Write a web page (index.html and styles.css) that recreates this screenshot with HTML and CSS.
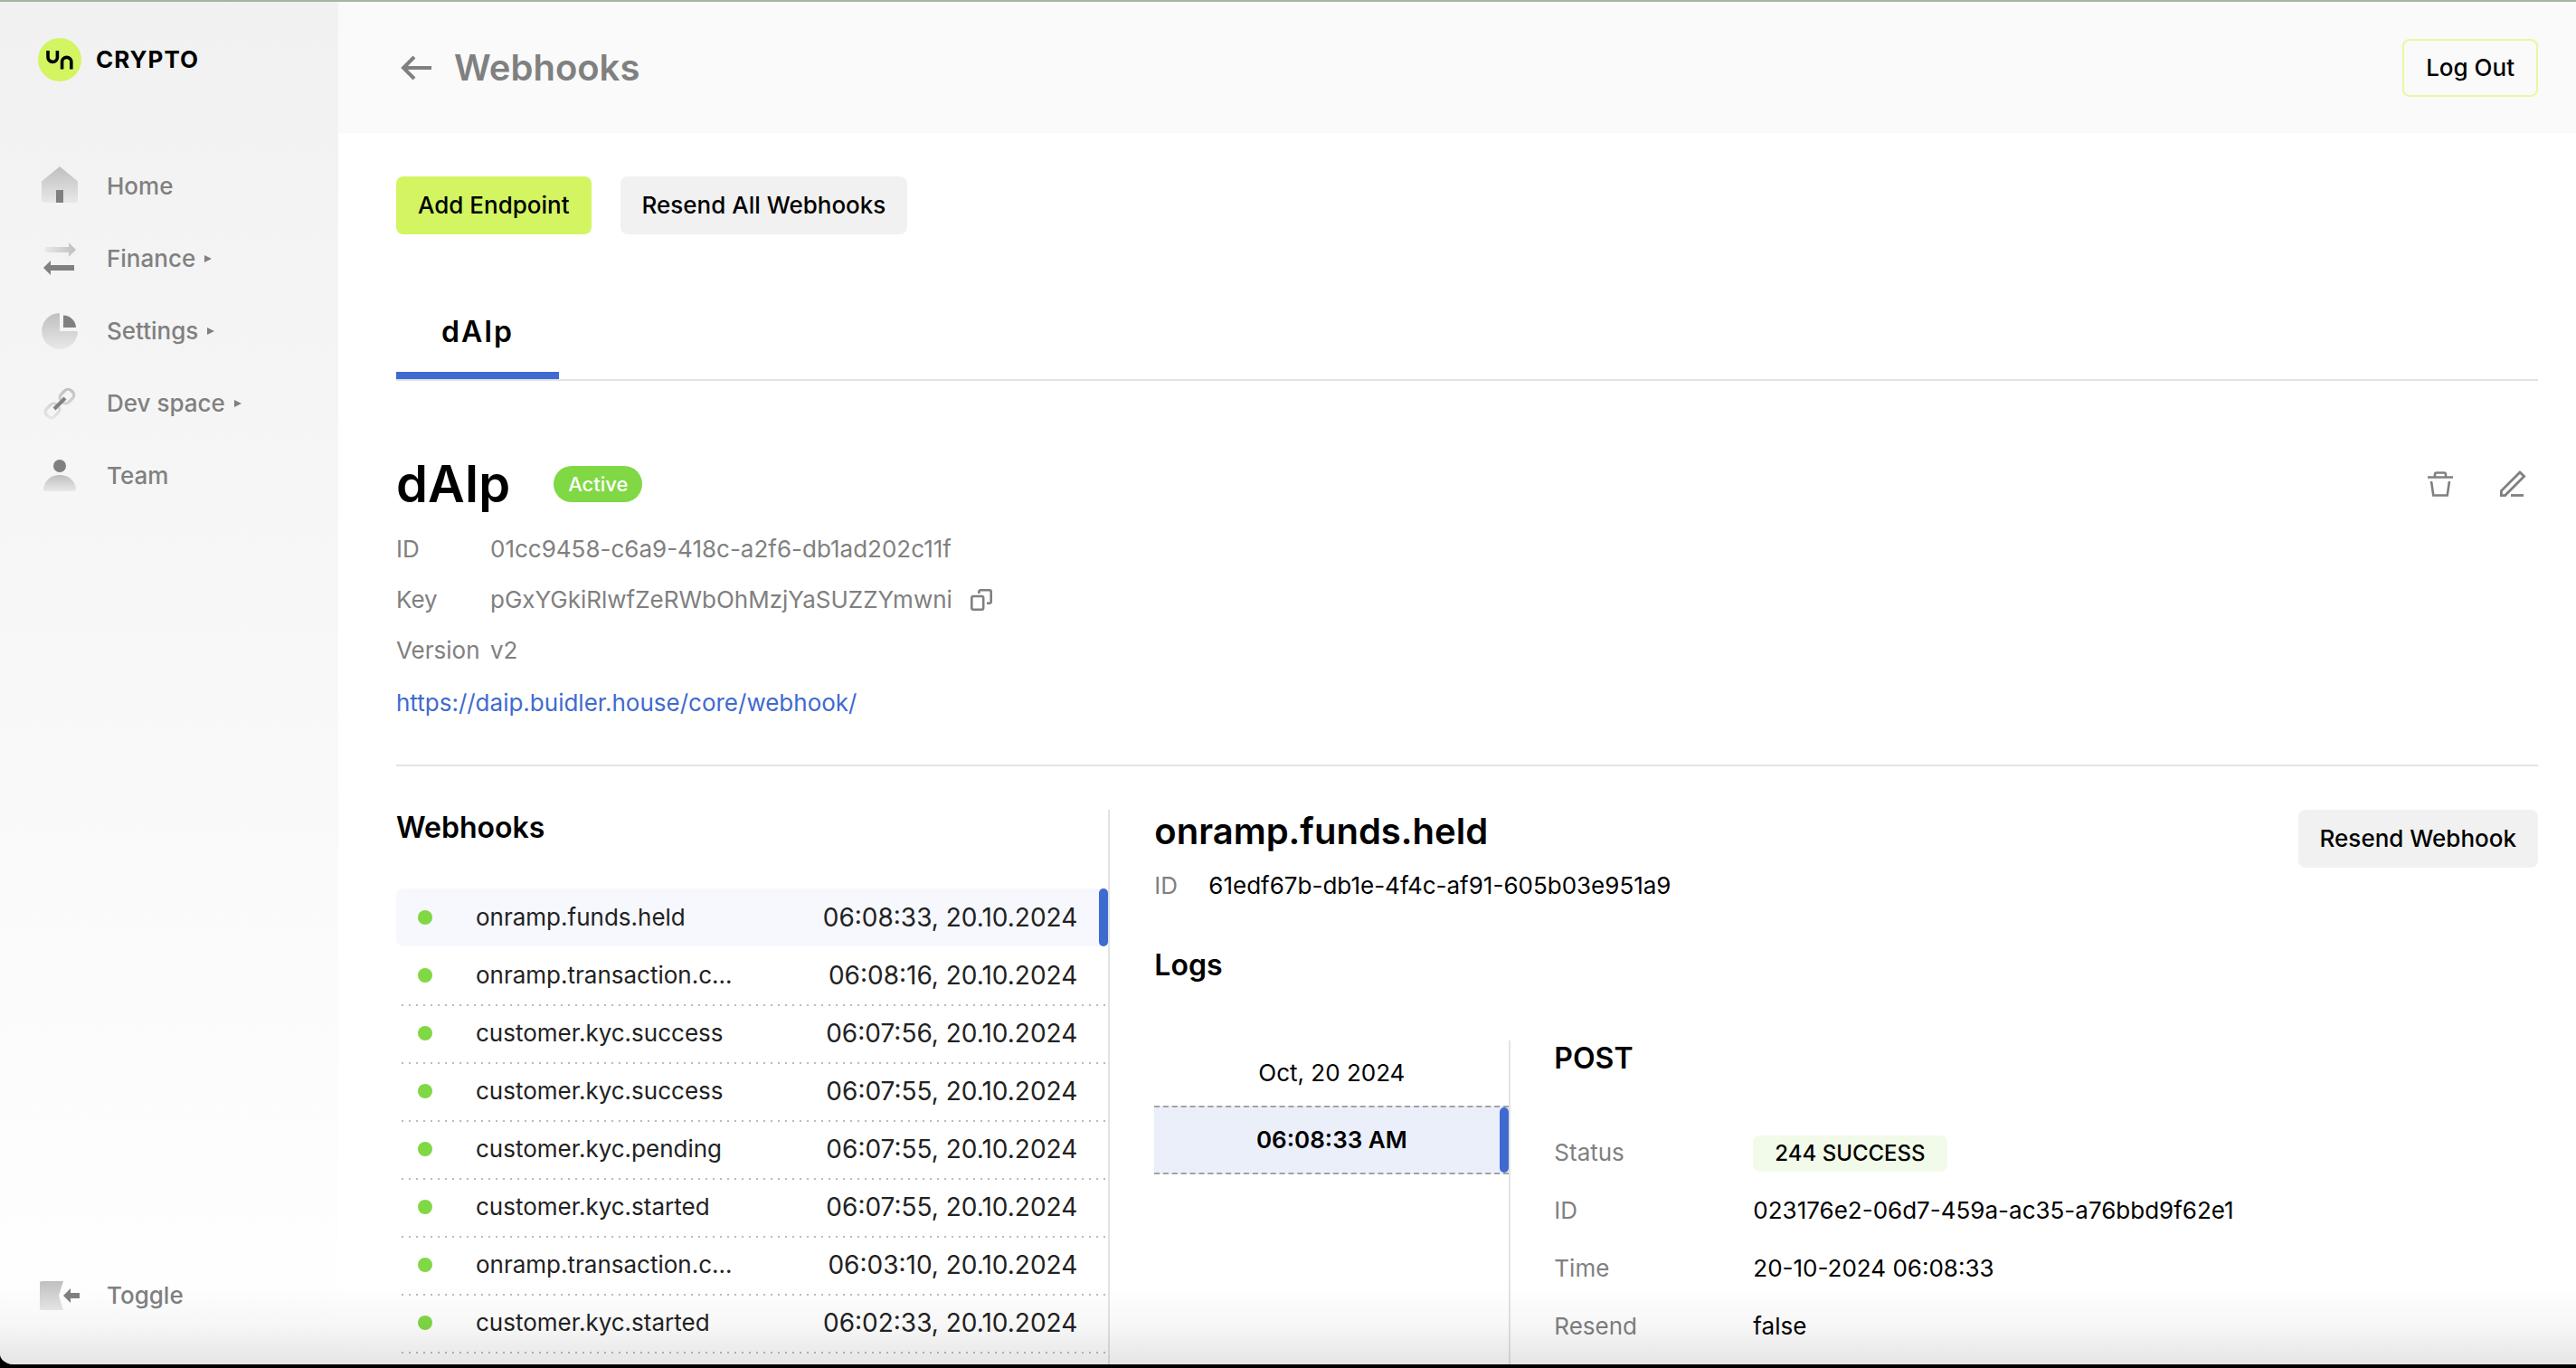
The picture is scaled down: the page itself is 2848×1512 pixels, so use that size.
FILE: index.html
```html
<!DOCTYPE html>
<html lang="en">
<head>
<meta charset="utf-8">
<title>Webhooks</title>
<meta name="viewport" content="width=device-width, initial-scale=1">
<link rel="stylesheet" href="styles.css">
</head>
<body>
<svg class="defs" width="0" height="0" aria-hidden="true">
  <defs>
    <linearGradient id="fade-down" x1="0" y1="0" x2="0" y2="1"><stop offset="0" stop-color="#bfbfbf"/><stop offset="1" stop-color="#e8e8e8"/></linearGradient>
    <linearGradient id="fade-left" x1="1" y1="0" x2="0" y2="0"><stop offset="0" stop-color="#bfbfbf"/><stop offset="1" stop-color="#e8e8e8"/></linearGradient>
    <linearGradient id="fade-link" gradientUnits="userSpaceOnUse" x1="24" y1="6" x2="24" y2="42"><stop offset="0" stop-color="#bfbfbf"/><stop offset="1" stop-color="#e8e8e8"/></linearGradient>
  </defs>
</svg>
<div class="window">
  <aside class="sidebar">
    <a class="brand" href="#">
      <svg viewBox="0 0 48 48" aria-hidden="true"><circle cx="24" cy="24" r="24" fill="#d3f562"/><path d="M11 14v7.200a5.200 5.200 0 0 0 10.400 0V14M26.600 34.500v-8a5.100 5.100 0 0 1 10.200 0v8" fill="none" stroke="#000" stroke-width="3.600"/></svg>
      <span>CRYPTO</span>
    </a>
    <nav class="nav">
      <a class="nav-item" href="#">
        <svg class="nav-icon" viewBox="0 0 48 48" aria-hidden="true"><path d="M24 2 44 18.500V39a3 3 0 0 1-3 3H7a3 3 0 0 1-3-3V18.500Z" fill="url(#fade-down)"/><path d="M20 28h8v14h-8z" fill="#808080"/></svg>
        <span>Home</span>
      </a>
      <a class="nav-item" href="#">
        <svg class="nav-icon" viewBox="0 0 48 48" aria-hidden="true"><path d="M8 11h26V6l8 8-8 8v-5H8z" fill="url(#fade-left)"/><path d="M40 37H14v5l-8-8 8-8v5h26z" fill="#808080"/></svg>
        <span>Finance</span><i class="caret"></i>
      </a>
      <a class="nav-item" href="#">
        <svg class="nav-icon" viewBox="0 0 48 48" aria-hidden="true"><path d="M24 5.500A1.500 1.500 0 0 0 22.500 4 20 20 0 1 0 44 25.500 1.500 1.500 0 0 0 42.500 24H24Z" fill="url(#fade-down)"/><path d="M28 6.500A14 14 0 0 1 42 20H28Z" fill="#808080"/></svg>
        <span>Settings</span><i class="caret"></i>
      </a>
      <a class="nav-item" href="#">
        <svg class="nav-icon" viewBox="0 0 48 48" aria-hidden="true"><g fill="none" stroke="url(#fade-link)" stroke-width="3.200" stroke-linejoin="round"><path d="M25 20c-2-3-.5-5 1-6.500l4-4c1.700-1.700 5-1.700 6.500 0l2 2c1.700 1.700 1.700 4.800 0 6.500l-4.500 4.500c-1.700 1.700-4.500 2-6.500.500"/><path d="M23 28c2 3 .5 5-1 6.500l-4 4c-1.700 1.700-5 1.700-6.500 0l-2-2c-1.700-1.700-1.700-4.800 0-6.500l4.500-4.500c1.700-1.700 4.500-2 6.500-.5"/></g><path d="m18 30 12-12" stroke="#808080" stroke-width="4"/></svg>
        <span>Dev space</span><i class="caret"></i>
      </a>
      <a class="nav-item" href="#">
        <svg class="nav-icon" viewBox="0 0 48 48" aria-hidden="true"><circle cx="24" cy="13" r="7" fill="#808080"/><path d="M6 37.500C8 28 15 23 24 23s16 5 18 14.500c.4 2.200-1 3.500-3 3.500H9c-2 0-3.400-1.300-3-3.500Z" fill="url(#fade-down)"/></svg>
        <span>Team</span>
      </a>
    </nav>
    <button class="nav-item toggle" type="button">
      <svg class="nav-icon" viewBox="0 0 48 48" aria-hidden="true"><path d="M4 8h24l-5 16 5 16H4a2 2 0 0 1-2-2V10a2 2 0 0 1 2-2Z" fill="url(#fade-down)"/><path d="M46 27H36v5l-8-8 8-8v5h10z" fill="#808080"/></svg>
      <span>Toggle</span>
    </button>
  </aside>

  <main class="main">
    <header class="topbar">
      <a class="back" href="#" aria-label="Back"><svg viewBox="0 0 36 28" aria-hidden="true"><path d="M35 14H5M16 2 4 14l12 12" fill="none" stroke="#808080" stroke-width="4"/></svg></a>
      <h1>Webhooks</h1>
      <button class="btn btn-outline" type="button">Log Out</button>
    </header>

    <div class="content">
      <div class="actions">
        <button class="btn btn-primary" type="button">Add Endpoint</button>
        <button class="btn" type="button">Resend All Webhooks</button>
      </div>

      <div class="tabs" role="tablist">
        <button class="tab" type="button" role="tab" aria-selected="true">dAIp</button>
      </div>

      <section class="endpoint">
        <div class="endpoint-head">
          <h2>dAIp</h2>
          <span class="badge">Active</span>
          <div class="tools">
            <button class="icon-btn" type="button" aria-label="Delete endpoint"><svg viewBox="0 1 32 32" aria-hidden="true"><path d="M2 9.500h28M10 9V6.500a2 2 0 0 1 2-2h8a2 2 0 0 1 2 2V9M6 14l2.300 15.500h15.400L26 14" fill="none" stroke="#808080" stroke-width="2.600"/></svg></button>
            <button class="icon-btn" type="button" aria-label="Edit endpoint"><svg viewBox="0 1 32 32" aria-hidden="true"><path d="M3.400 29.600v-5L24 4l4.600 4.600-21 21z" fill="none" stroke="#808080" stroke-width="2.800"/><path d="M14 29.500h14" stroke="#808080" stroke-width="2.800"/></svg></button>
          </div>
        </div>
        <dl class="facts">
          <dt>ID</dt><dd>01cc9458-c6a9-418c-a2f6-db1ad202c11f</dd>
          <dt>Key</dt><dd>pGxYGkiRlwfZeRWbOhMzjYaSUZZYmwni <button class="copy" type="button" aria-label="Copy key"><svg viewBox="0 0 24 24" aria-hidden="true"><g fill="none" stroke="#808080" stroke-width="2.600" stroke-linejoin="round"><path d="M3 8h9.500a1.700 1.700 0 0 1 1.700 1.700v11.300a1.700 1.700 0 0 1-1.700 1.700H3a1.700 1.700 0 0 1-1.700-1.700V9.700A1.700 1.700 0 0 1 3 8Z"/><path d="M9.300 5V3A1.700 1.700 0 0 1 11 1.300h10A1.700 1.700 0 0 1 22.700 3v11a1.700 1.700 0 0 1-1.700 1.700h-3"/></g></svg></button></dd>
          <dt>Version</dt><dd>v2</dd>
        </dl>
        <a class="url" href="https://daip.buidler.house/core/webhook/">https://daip.buidler.house/core/webhook/</a>
      </section>

      <div class="columns">
        <section class="hooks">
          <h3>Webhooks</h3>
          <ul class="hook-list">
            <li><button class="hook selected" type="button"><i class="dot"></i><span>onramp.funds.held</span><time>06:08:33, 20.10.2024</time></button></li>
            <li><button class="hook" type="button"><i class="dot"></i><span>onramp.transaction.c...</span><time>06:08:16, 20.10.2024</time></button></li>
            <li><button class="hook" type="button"><i class="dot"></i><span>customer.kyc.success</span><time>06:07:56, 20.10.2024</time></button></li>
            <li><button class="hook" type="button"><i class="dot"></i><span>customer.kyc.success</span><time>06:07:55, 20.10.2024</time></button></li>
            <li><button class="hook" type="button"><i class="dot"></i><span>customer.kyc.pending</span><time>06:07:55, 20.10.2024</time></button></li>
            <li><button class="hook" type="button"><i class="dot"></i><span>customer.kyc.started</span><time>06:07:55, 20.10.2024</time></button></li>
            <li><button class="hook" type="button"><i class="dot"></i><span>onramp.transaction.c...</span><time>06:03:10, 20.10.2024</time></button></li>
            <li><button class="hook" type="button"><i class="dot"></i><span>customer.kyc.started</span><time>06:02:33, 20.10.2024</time></button></li>
          </ul>
        </section>

        <section class="detail">
          <div class="detail-head">
            <div>
              <h2>onramp.funds.held</h2>
              <p class="detail-id"><span>ID</span>61edf67b-db1e-4f4c-af91-605b03e951a9</p>
            </div>
            <button class="btn" type="button">Resend Webhook</button>
          </div>
          <h3 class="logs-title">Logs</h3>
          <div class="logs">
            <div class="log-times">
              <p class="log-day">Oct, 20 2024</p>
              <button class="log-time" type="button">06:08:33 AM</button>
            </div>
            <div class="log">
              <h3>POST</h3>
              <dl class="log-facts">
                <dt>Status</dt><dd><span class="status">244 SUCCESS</span></dd>
                <dt>ID</dt><dd>023176e2-06d7-459a-ac35-a76bbd9f62e1</dd>
                <dt>Time</dt><dd>20-10-2024 06:08:33</dd>
                <dt>Resend</dt><dd>false</dd>
              </dl>
            </div>
          </div>
        </section>
      </div>
    </div>
  </main>
</div>
</body>
</html>
```
FILE: styles.css
```css
* { box-sizing: border-box; }

body {
  margin: 0;
  background: #000;
  color: #000;
  font: 400 26px/40px Inter, "Liberation Sans", sans-serif;
}

h1, h2, h3, p, ul, dl, dd { margin: 0; padding: 0; }
h1, h2, h3 { font-weight: 600; }
ul { list-style: none; }
a { color: inherit; text-decoration: none; }
button { font: inherit; color: inherit; border: 0; background: none; padding: 0; cursor: pointer; }
svg { display: block; }
.defs { position: absolute; }

/* Window frame */
.window {
  position: relative;
  display: flex;
  height: 100vh;
  overflow: hidden;
  background: #fff;
  border-top: 2px solid #a3b5a3;
  border-bottom: 4px solid #000;
  border-radius: 0 0 0 16px;
}
.window::after {
  content: "";
  position: absolute;
  inset: auto 0 0;
  height: 88px;
  background: linear-gradient(to bottom, rgba(0, 0, 0, 0), rgba(0, 0, 0, 0.03) 50%, rgba(0, 0, 0, 0.1));
  pointer-events: none;
}

/* Sidebar */
.sidebar {
  flex: 0 0 374px;
  display: flex;
  flex-direction: column;
  padding: 40px 0 36px 42px;
  background: linear-gradient(#f1f1f1, #fff);
  color: #808080;
}
.brand {
  display: flex;
  align-items: center;
  gap: 16px;
  color: #000;
  font-weight: 700;
  letter-spacing: 1px;
}
.brand svg { width: 48px; height: 48px; }
.nav { margin-top: 76px; }
.nav-item {
  display: flex;
  align-items: center;
  height: 80px;
  font-weight: 500;
}
.nav-icon { width: 48px; height: 48px; margin-right: 28px; }
.caret {
  margin-left: 10px;
  border-left: 8px solid #808080;
  border-top: 4px solid transparent;
  border-bottom: 4px solid transparent;
}
.toggle { margin-top: auto; }

/* Header */
.main { flex: 1; min-width: 0; border-top: 1px solid #fff; }
.topbar {
  display: flex;
  align-items: center;
  height: 144px;
  padding: 0 42px 0 68px;
  background: #fafafa;
}
.topbar h1 { margin-left: 24px; font-size: 40px; line-height: 48px; color: #808080; }
.topbar .btn { margin-left: auto; }
.back svg { width: 36px; height: 28px; }

.btn {
  height: 64px;
  padding: 0 24px;
  border-radius: 8px;
  background: #f1f1f1;
  font-weight: 500;
  white-space: nowrap;
}
.btn-primary { background: #d3f562; }
.btn-outline { background: none; border: 2px solid #e6f8a3; }

/* Content */
.content { padding: 48px 42px 0 64px; }
.actions { display: flex; gap: 32px; }
.tabs { display: flex; margin-top: 64px; border-bottom: 2px solid #e3e3e3; }
.tab {
  padding: 24px 50px;
  border-bottom: 8px solid #3f6ad0;
  font-size: 32px;
  font-weight: 600;
  letter-spacing: 2px;
}

.endpoint {
  margin-top: 82px;
  padding-bottom: 38px;
  border-bottom: 2px solid #e3e3e3;
  color: #808080;
}
.endpoint-head { display: flex; align-items: center; color: #000; }
.endpoint-head h2 { font-size: 56px; line-height: 64px; }
.badge {
  margin-left: 48px;
  padding: 0 16px;
  border-radius: 20px;
  background: #80d845;
  color: #fff;
  font-size: 22px;
  font-weight: 500;
}
.tools { display: flex; gap: 48px; margin-left: auto; padding-right: 12px; }
.icon-btn svg { width: 32px; height: 32px; }
.facts {
  display: grid;
  grid-template-columns: 104px 1fr;
  margin-top: 12px;
  line-height: 56px;
}
.facts dd { display: flex; align-items: center; gap: 20px; }
.copy svg { width: 24px; height: 24px; }
.url { display: block; line-height: 60px; color: #3f6ad0; }

/* Webhook list */
.columns { display: grid; grid-template-columns: 1fr 2fr; margin-top: 48px; }
.hooks { border-right: 2px solid #e3e3e3; }
h3 { font-size: 32px; line-height: 40px; }
.hook-list { margin-top: 47px; color: #222; }
.hook {
  position: relative;
  display: flex;
  align-items: center;
  width: 100%;
  height: 64px;
  padding: 0 34px 0 24px;
}
.hook::after {
  content: "";
  position: absolute;
  inset: auto 2px -2px 6px;
  height: 2px;
  background: repeating-linear-gradient(to right, #bbb 0 2px, transparent 2px 8px);
}
.hook.selected { border-radius: 8px; background: #f6f8fd; }
.hook.selected::after {
  inset: 0 0 0 auto;
  width: 10px;
  height: auto;
  border-radius: 5px;
  background: #3f6ad0;
}
.dot { width: 16px; height: 16px; margin-right: 48px; border-radius: 50%; background: #80d845; }
.hook time { margin-left: auto; font-size: 28px; }

/* Webhook detail */
.detail { padding-left: 49px; }
.detail-head { display: flex; justify-content: space-between; align-items: flex-start; }
.detail h2 { font-size: 40px; line-height: 48px; }
.detail-id { line-height: 72px; }
.detail-id span { display: inline-block; width: 60px; color: #808080; }
.logs-title { margin-top: 32px; }
.logs { display: flex; margin-top: 63px; }
.log-times { width: 394px; min-height: 400px; border-right: 2px solid #e3e3e3; text-align: center; }
.log-day { line-height: 72px; }
.log-time {
  position: relative;
  display: block;
  width: 100%;
  height: 76px;
  border: dashed #a3a3a3;
  border-width: 2px 0;
  background: #ebeffa;
  font-weight: 600;
}
.log-time::after {
  content: "";
  position: absolute;
  inset: 0 0 0 auto;
  width: 10px;
  border-radius: 5px;
  background: #3f6ad0;
}
.log { padding-left: 48px; }
.log-facts {
  display: grid;
  grid-template-columns: 220px auto;
  margin-top: 52px;
  line-height: 64px;
}
.facts dt, .log-facts dt { color: #808080; }
.status {
  display: inline-block;
  padding: 0 24px;
  border-radius: 8px;
  background: #f2fbe9;
  font-size: 24px;
  font-weight: 500;
  line-height: 40px;
}
```
